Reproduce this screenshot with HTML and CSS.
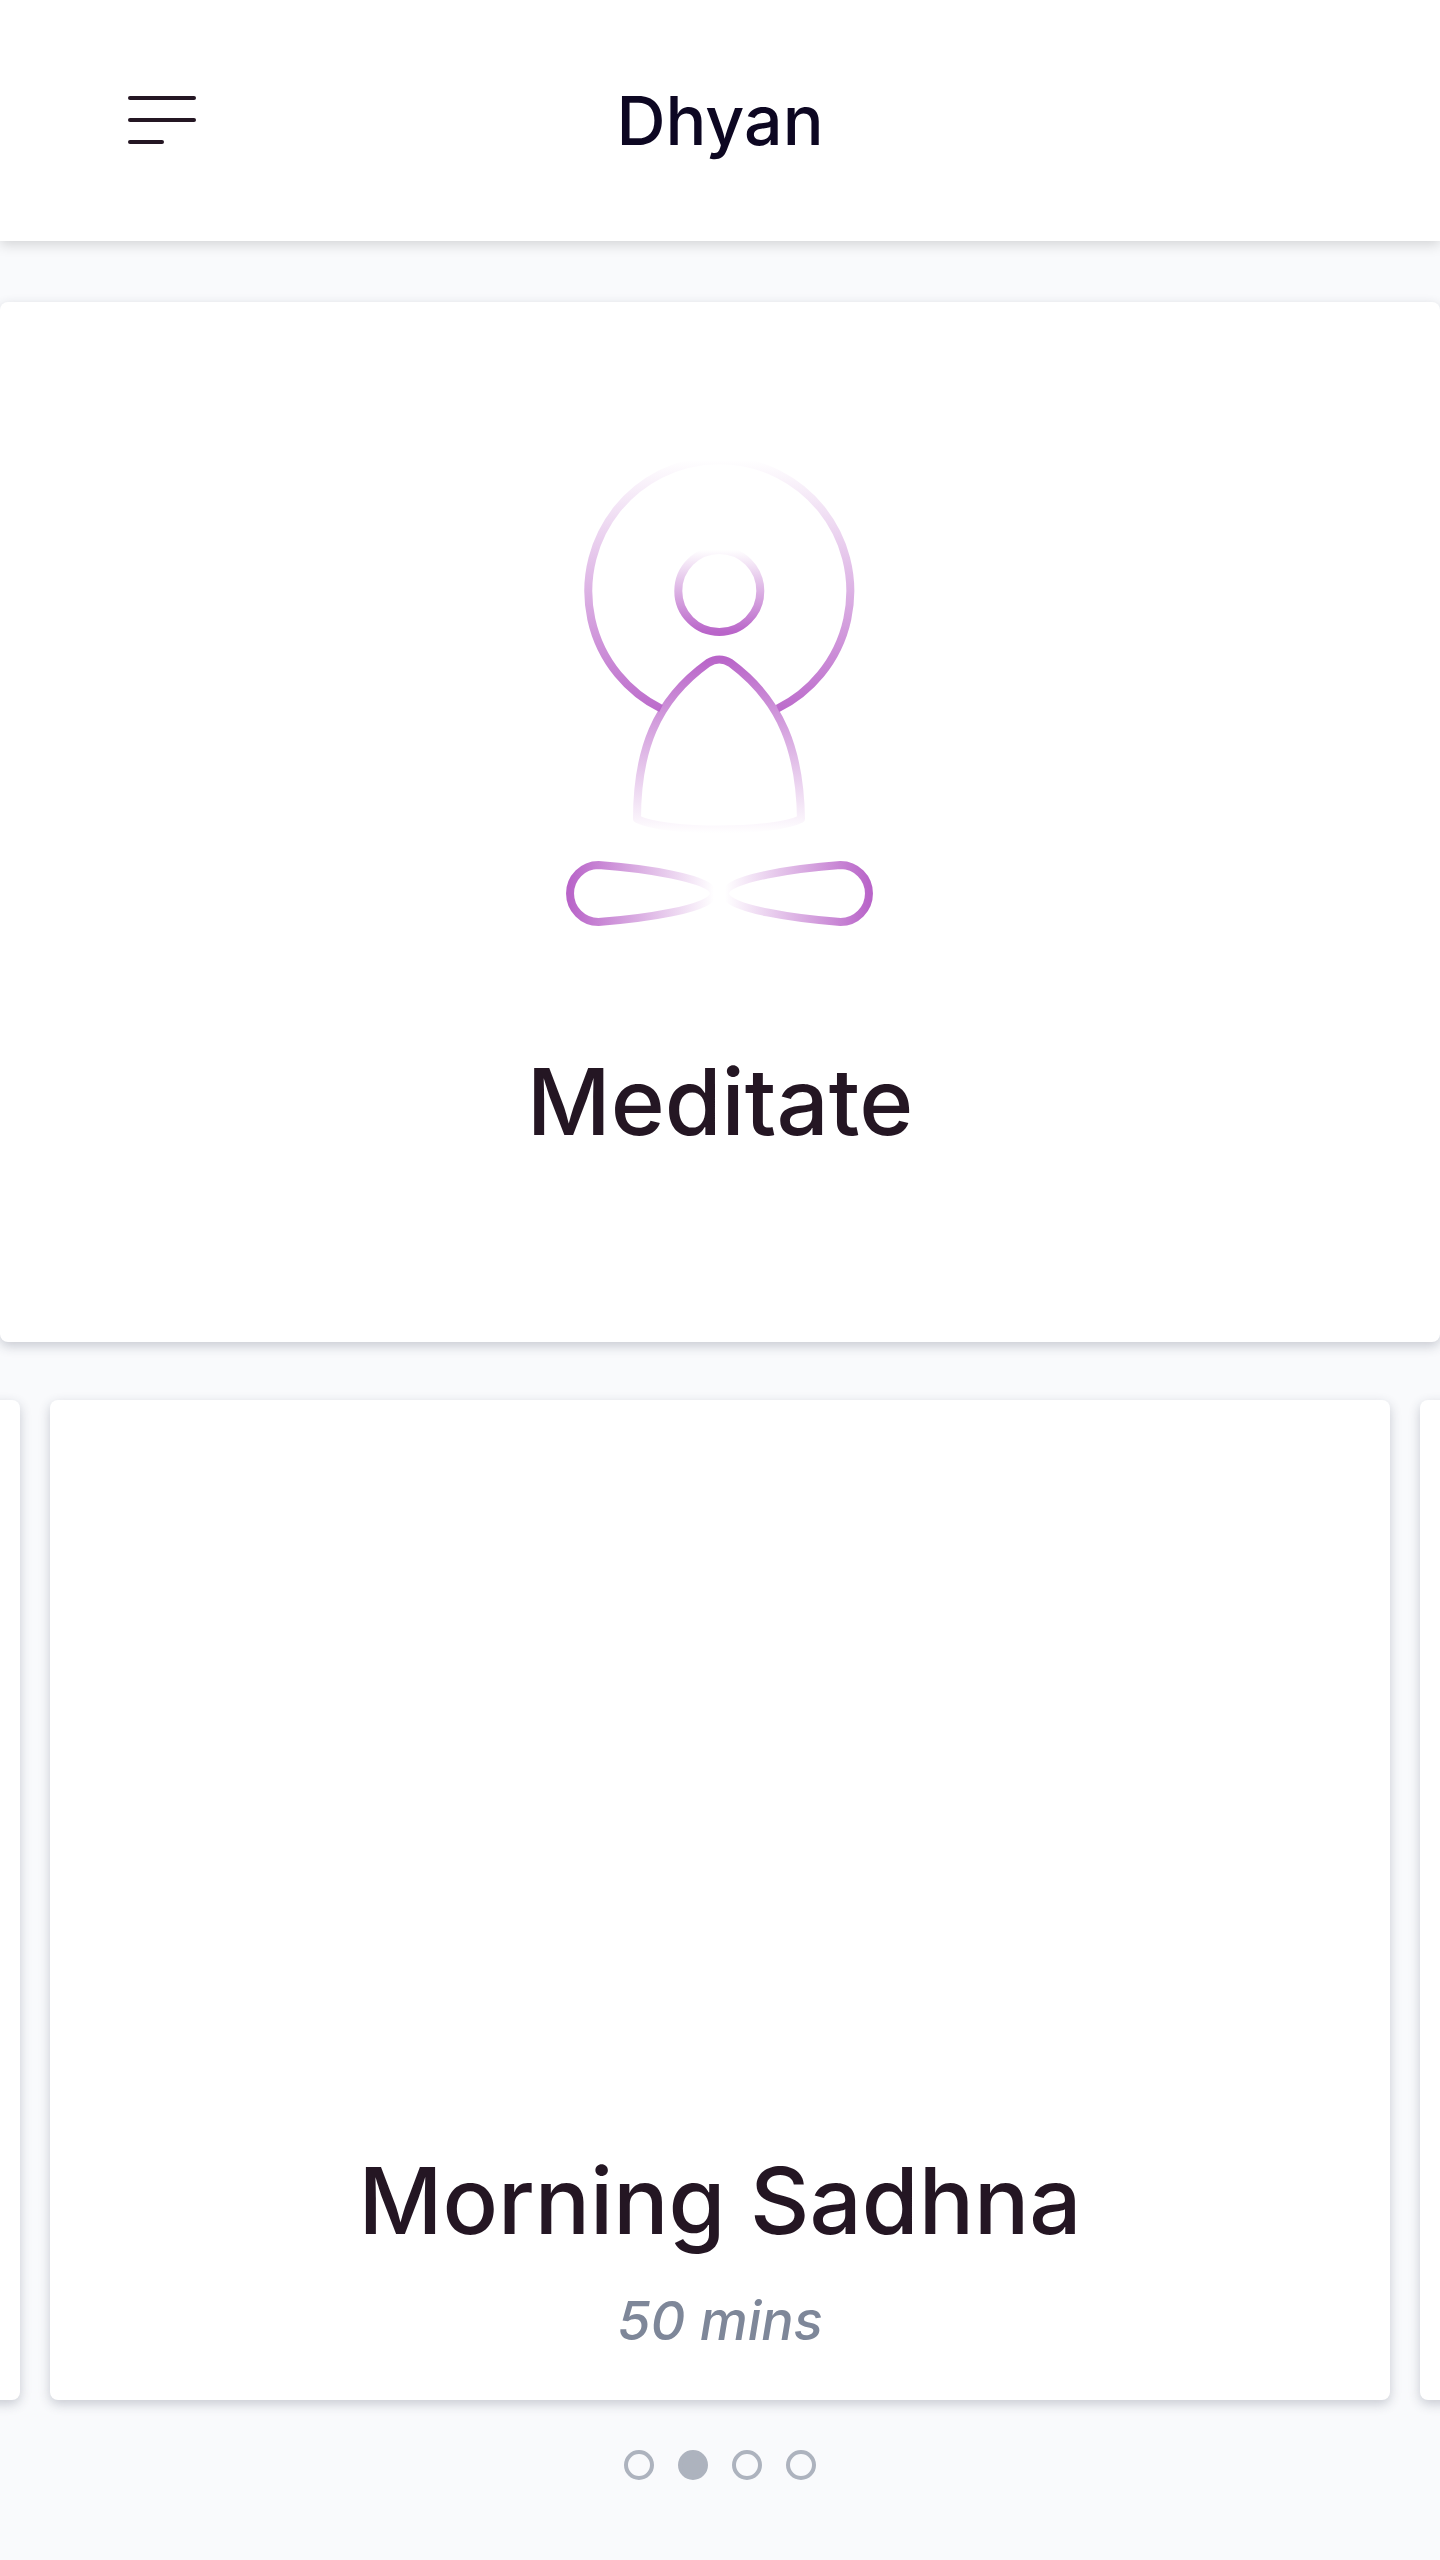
FILE: index.html
```html
<!DOCTYPE html>
<html lang="en">
<head>
<meta charset="utf-8">
<meta name="viewport" content="width=device-width, initial-scale=1">
<title>Dhyan</title>
<link rel="stylesheet" href="styles.css">
</head>
<body>
<header class="topbar">
  <button class="menu" type="button" aria-label="Menu">
    <svg class="menu-icon" viewBox="0 0 68 48" aria-hidden="true">
      <rect width="68" height="4" rx="2"/>
      <rect y="22" width="68" height="4" rx="2"/>
      <rect y="44" width="36" height="4" rx="2"/>
    </svg>
  </button>
  <h1 class="brand">Dhyan</h1>
</header>
<main class="content">
  <section class="card hero">
    <svg class="figure" viewBox="560 450 320 480" aria-hidden="true">
      <defs>
        <linearGradient id="halo" gradientUnits="userSpaceOnUse" x1="0" y1="460" x2="0" y2="722">
          <stop offset="0" stop-color="#b965c9" stop-opacity="0"/><stop offset="1" stop-color="#b965c9"/>
        </linearGradient>
        <linearGradient id="head" gradientUnits="userSpaceOnUse" x1="0" y1="550" x2="0" y2="632">
          <stop offset="0" stop-color="#b965c9" stop-opacity="0"/><stop offset="1" stop-color="#b965c9"/>
        </linearGradient>
        <linearGradient id="robe" gradientUnits="userSpaceOnUse" x1="0" y1="659" x2="0" y2="833">
          <stop offset="0" stop-color="#b965c9"/><stop offset="1" stop-color="#b965c9" stop-opacity="0"/>
        </linearGradient>
        <linearGradient id="leg-left" gradientUnits="userSpaceOnUse" x1="570" y1="0" x2="714" y2="0">
          <stop offset="0" stop-color="#b965c9"/><stop offset="1" stop-color="#b965c9" stop-opacity="0"/>
        </linearGradient>
        <linearGradient id="leg-right" gradientUnits="userSpaceOnUse" x1="869" y1="0" x2="725" y2="0">
          <stop offset="0" stop-color="#b965c9"/><stop offset="1" stop-color="#b965c9" stop-opacity="0"/>
        </linearGradient>
      </defs>
      <g fill="none" stroke-width="8" stroke-linejoin="round">
        <path stroke="url(#halo)" d="M661 708.5A131 131 0 1 1 777.6 708.5"/>
        <circle stroke="url(#head)" cx="719.3" cy="591" r="41"/>
        <path stroke="url(#robe)" d="M708 663C655 701 637 752 637 819C665 833 773 833 801 819C800 752 782 701 730.6 663Q719.3 656 708 663Z"/>
        <path stroke="url(#leg-left)" d="M598.5 865C640 868 714 878 714 893.5C714 909 640 919 598.5 922A28.5 28.5 0 0 1 598.5 865Z"/>
        <path stroke="url(#leg-right)" d="M840.5 865C799 868 725 878 725 893.5C725 909 799 919 840.5 922A28.5 28.5 0 0 0 840.5 865Z"/>
      </g>
    </svg>
    <h2 class="title">Meditate</h2>
  </section>
  <section class="carousel" aria-label="Sessions">
    <div class="card slide"></div>
    <article class="card slide">
      <h2 class="title">Morning Sadhna</h2>
      <p class="duration">50 mins</p>
    </article>
    <div class="card slide"></div>
  </section>
  <nav class="dots" aria-label="Choose session">
    <button class="dot" type="button" aria-label="Session 1"></button>
    <button class="dot dot-active" type="button" aria-label="Session 2" aria-current="true"></button>
    <button class="dot" type="button" aria-label="Session 3"></button>
    <button class="dot" type="button" aria-label="Session 4"></button>
  </nav>
</main>
</body>
</html>
```
FILE: styles.css
```css
* { box-sizing: border-box; }

body {
  margin: 0;
  min-height: 100vh;
  background: #f9fafc;
  color: #241623;
  font-family: Inter, "Liberation Sans", sans-serif;
}

h1, h2, p { margin: 0; }

button {
  padding: 0;
  border: 0;
  background: none;
  cursor: pointer;
}

.topbar {
  display: grid;
  grid-template-columns: 1fr auto 1fr;
  align-items: center;
  padding: 76px 128px 77px;
  background: #fff;
  box-shadow: 0 4px 12px rgba(0, 0, 0, 0.15);
}

.menu { justify-self: start; }

.menu-icon {
  display: block;
  width: 68px;
  height: 48px;
  fill: #241623;
}

.brand {
  color: #0d0722;
  font-size: 68px;
  font-weight: 450;
  line-height: 88px;
}

.content {
  display: flex;
  flex-direction: column;
  padding: 61px 0 80px;
}

.card {
  border-radius: 8px;
  background: #fff;
  box-shadow: 0 4px 12px rgba(40, 50, 75, 0.24);
}

.hero {
  display: flex;
  flex-direction: column;
  align-items: center;
  gap: 112px;
  padding: 148px 32px 180px;
}

.figure {
  display: block;
  width: 320px;
  height: 480px;
}

.title {
  font-size: 92px;
  font-weight: 450;
  line-height: 120px;
  text-align: center;
}

/* Vertical padding leaves room for the card shadows inside the clipped track. */
.carousel {
  display: flex;
  justify-content: center;
  gap: 30px;
  overflow: hidden;
  margin-top: 34px;
  padding: 24px 0;
}

.slide {
  display: flex;
  flex: 0 0 calc(100% - 100px);
  flex-direction: column;
  align-items: center;
  justify-content: flex-end;
  gap: 24px;
  min-height: 1000px;
  padding: 32px 32px 43px;
}

.duration {
  color: #7e8799;
  font-size: 54px;
  font-style: italic;
  font-weight: 500;
  line-height: 72px;
}

.dots {
  display: flex;
  justify-content: center;
  gap: 24px;
  margin-top: 26px;
}

.dot {
  width: 30px;
  height: 30px;
  border: 4px solid #adb3be;
  border-radius: 50%;
}

.dot-active { background: #adb3be; }
```
